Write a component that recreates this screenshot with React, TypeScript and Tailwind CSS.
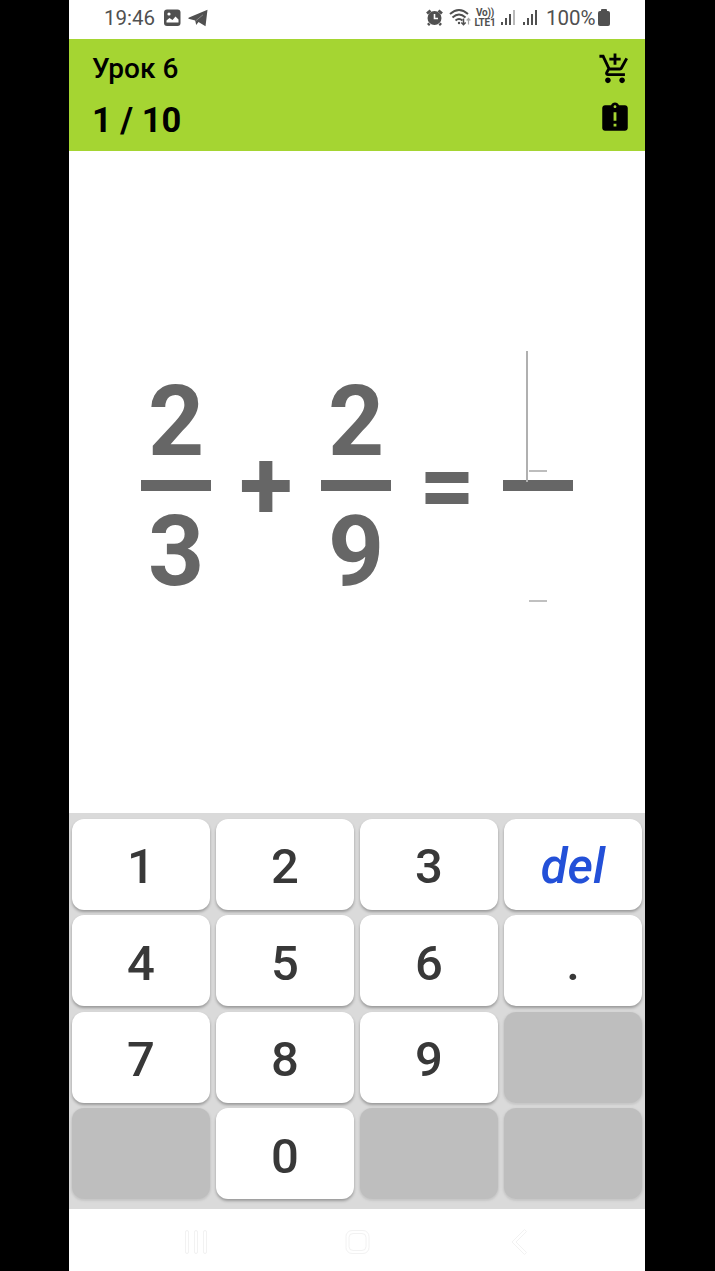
import type { ReactNode } from "react";
import clsx from "clsx";
import { MdAddShoppingCart, MdAssignmentLate } from "react-icons/md";

const keys = ["1", "2", "3", "del", "4", "5", "6", ".", "7", "8", "9", "", "", "0", "", ""];

function SignalBars({ weak = false }: { weak?: boolean }) {
  return (
    <svg width="17" height="17" viewBox="0 0 17 17" fill="#505050">
      <rect x="1" y="13" width="2" height="3" />
      <rect x="5" y="9" width="2" height="7" />
      <rect x="9" y="5" width="2" height="11" />
      <rect x="13" y="1" width="2" height="15" opacity={weak ? 0.4 : 1} />
    </svg>
  );
}

function StatusBar() {
  return (
    <div className="flex h-[39px] shrink-0 items-start pt-[7px] pl-[35px] text-[20.5px] leading-[22px] text-[#505050]">
      <span className="w-[52px] whitespace-nowrap">19:46</span>
      <svg className="mt-0.5 ml-2" width="17" height="18" viewBox="0 0 17 18">
        <rect x="0" y="0.5" width="16.5" height="16.5" rx="3" fill="#505050" />
        <path d="M2.5 13.5V11.5l3-2.5 3 2 3-3.5 3 3v3z" fill="#fff" />
        <circle cx="5" cy="5" r="1.6" fill="#fff" />
      </svg>
      <svg className="mt-0.5 ml-[7px]" width="21" height="19" viewBox="0 0 21 19">
        <path d="M19.5 0.8 17.5 17.2 10.5 13 8.2 16 7.2 11.5 0.5 9.8Q0 9 1 8.5z" fill="#505050" />
        <path d="M8 11.6 15 5.8" stroke="#fff" strokeWidth="0.8" opacity="0.4" />
      </svg>

      {/* Alarm */}
      <svg className="mt-px ml-[217px]" width="18" height="19" viewBox="0 0 18 19">
        <circle cx="8.5" cy="10" r="7" fill="#505050" />
        <path d="M1 5.5 4.5 2.5M16 5.5l-3.5-3M3.5 15.5 2 17M13.5 15.5 15 17" stroke="#505050" strokeWidth="2.8" />
        <path d="M8.5 6v4.5H12" stroke="#fff" strokeWidth="1.6" fill="none" />
      </svg>

      {/* Wi-Fi */}
      <svg className="mt-px ml-[5px]" width="23" height="19" viewBox="0 0 23 19" fill="none" stroke="#505050" strokeWidth="1.9">
        <path d="M1 6Q10 -2 19 6M3.5 9.5Q10 3.500 16.5 9.5M6.500 12.500q3.500-3 7 0" />
        <circle cx="10" cy="15" r="1.2" fill="#505050" stroke="none" />
        <path d="M14.5 10.5v6m-2.2-2 2.2 2.2 2.2-2.2" strokeWidth="1.5" />
        <path d="M19.5 16.5v-6m-1.8 2 1.8-2 1.8 2" strokeWidth="1.2" opacity="0.5" />
      </svg>
      <div className="ml-0.5 flex w-[22px] flex-col items-center pt-px text-[10px] leading-[10px] font-bold tracking-[-0.2px]">
        <span>Vo))</span>
        <span>LTE1</span>
      </div>
      <span className="mt-0.5 ml-1"><SignalBars weak /></span>
      <span className="mt-0.5 ml-[5px]"><SignalBars /></span>
      <span className="ml-[7px] w-[51px] whitespace-nowrap">100%</span>
      <svg className="mt-0.5 ml-px" width="12" height="18" viewBox="0 0 12 18" fill="#505050">
        <rect x="3" y="0" width="6" height="4" rx="1" />
        <rect x="0" y="2" width="12" height="15" rx="2" />
      </svg>
    </div>
  );
}

function Header() {
  return (
    <header className="flex h-28 shrink-0 justify-between bg-[#a5d532] text-black">
      <div className="flex flex-col pl-[23px]">
        <span className="mt-[14px] text-[28px] leading-8 font-medium">Урок 6</span>
        <span className="mt-[15px] text-[34.5px] leading-10 font-bold">1 / 10</span>
      </div>
      <div className="flex flex-col gap-[15px] pt-[13px] pr-[13px]">
        <MdAddShoppingCart size={34} />
        <MdAssignmentLate size={34} />
      </div>
    </header>
  );
}

function Fraction({ top, bottom }: { top: ReactNode; bottom: ReactNode }) {
  return (
    <div className="flex w-[70px] flex-col items-center">
      <div className="flex h-[129px] items-end leading-[116px]">{top}</div>
      <div className="h-[11px] w-full bg-[#666]" />
      <div className="flex h-[119px] items-end leading-[116px]">{bottom}</div>
    </div>
  );
}

function Operator({ children, className }: { children: ReactNode; className: string }) {
  return <span className={clsx("pt-[86px] text-center leading-none", className)}>{children}</span>;
}

function Equation() {
  return (
    <div className="flex items-start pt-[200px] pl-[72px] text-[98px] font-bold text-[#666]">
      <Fraction top="2" bottom="3" />
      <Operator className="w-[110px]">+</Operator>
      <Fraction top="2" bottom="9" />
      <Operator className="w-[112px]">=</Operator>
      <Fraction
        top={
          <span className="relative block h-[129px] w-[22px]">
            <span className="absolute top-0 -left-px h-[131px] w-[2px] bg-[#b0b0b0]" />
            <span className="absolute top-[119px] left-[2px] h-[2px] w-[18px] bg-[#bdbdbd]" />
          </span>
        }
        bottom={<span className="mb-[8px] h-[2px] w-[18px] bg-[#c0c0c0]" />}
      />
    </div>
  );
}

function Key({ label }: { label: string }) {
  if (!label) {
    return <div className="rounded-xl bg-[#bebebe] shadow-[0_1px_2px_1px_#c8c8c8]" />;
  }
  return (
    <button
      className={clsx(
        "flex items-center justify-center rounded-xl bg-white pt-[5px] text-[49px] leading-none font-medium shadow-[0_2px_3px_rgba(0,0,0,0.3)]",
        label === "del" ? "text-[#2350d8] italic" : "text-[#383838]"
      )}
    >
      {label}
    </button>
  );
}

function Keypad() {
  return (
    <div className="grid h-[396px] shrink-0 grid-cols-4 grid-rows-4 gap-x-1.5 gap-y-[5.5px] bg-[#dadada] px-[3px] pt-[5.5px] pb-[10px]">
      {keys.map((label, i) => (
        <Key key={i} label={label} />
      ))}
    </div>
  );
}

function NavBar() {
  return (
    <div className="flex h-[62px] shrink-0 items-start pt-5 pl-[115px]">
      <svg width="25" height="26" viewBox="0 0 25 26" fill="none" stroke="#f2f2f2">
        <rect x="1.5" y="1.5" width="3" height="23" rx="1.5" />
        <rect x="10.5" y="1.5" width="3" height="23" rx="1.5" />
        <rect x="19.5" y="1.5" width="3" height="23" rx="1.5" />
      </svg>
      <svg className="ml-[136px]" width="26" height="26" viewBox="0 0 26 26" fill="none" stroke="#f2f2f2">
        <rect x="1" y="1.5" width="23" height="23" rx="6" />
        <rect x="4" y="4.5" width="17" height="17" rx="4" />
      </svg>
      <svg className="ml-[140px]" width="17" height="27" viewBox="0 0 17 27" fill="none" stroke="#f2f2f2">
        <path d="m13.5 0.5 2 2L5 13l10.5 10.5-2 2L1 13z" />
      </svg>
    </div>
  );
}

export default function App() {
  return (
    <div className="flex h-[1271px] w-[715px] justify-center bg-black font-[Roboto,sans-serif]">
      <div className="mr-px flex w-[576px] flex-col bg-white">
        <StatusBar />
        <Header />
        <main className="min-h-0 flex-1">
          <Equation />
        </main>
        <Keypad />
        <NavBar />
      </div>
    </div>
  );
}
